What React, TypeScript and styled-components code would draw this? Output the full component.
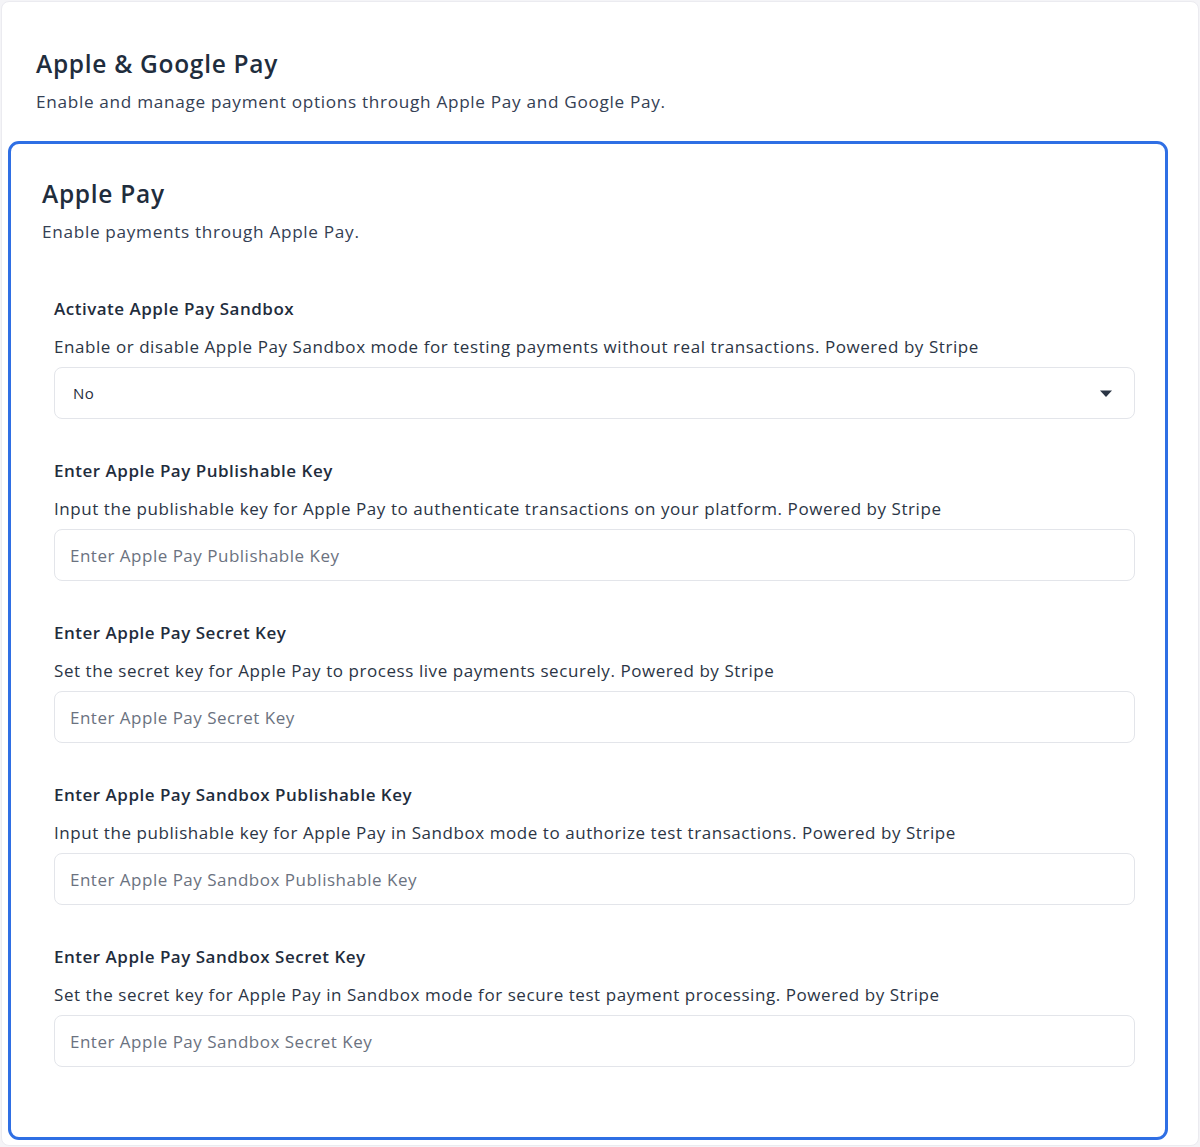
import styled, { createGlobalStyle } from "styled-components";

const GlobalStyle = createGlobalStyle`
  * {
    box-sizing: border-box;
  }

  body {
    margin: 0;
    background: #f4f4f7;
    font-family: "Open Sans", "Liberation Sans", sans-serif;
    color: #1f2d3d;
  }
`;

const Page = styled.div`
  padding: 1px;
`;

const Section = styled.section`
  background: #ffffff;
  border: 1px solid #ebebf0;
  border-radius: 8px;
  padding: 44px 30px 5px 6px;
`;

const SectionHead = styled.div`
  padding-left: 28px;
  margin-bottom: 26px;
`;

const Title = styled.h1`
  margin: 0;
  font-size: 24.5px;
  line-height: 36px;
  font-weight: 600;
  letter-spacing: 0.7px;
  color: #1f2d3d;
`;

const Subtitle = styled.p`
  margin: 7px 0 0;
  font-size: 17.2px;
  line-height: 26px;
  letter-spacing: 0.68px;
  color: #344054;
`;

const Card = styled.div`
  border: 3px solid #2f6fe4;
  border-radius: 11px;
  padding: 32px 30px 70px 31px;
`;

const CardTitle = styled.h2`
  margin: 0;
  font-size: 24.5px;
  line-height: 36px;
  font-weight: 600;
  letter-spacing: 0.7px;
  color: #1f2d3d;
`;

const CardSubtitle = styled.p`
  margin: 7px 0 0;
  font-size: 17.2px;
  line-height: 26px;
  letter-spacing: 0.68px;
  color: #344054;
`;

const Fields = styled.div`
  display: flex;
  flex-direction: column;
  gap: 39px;
  margin-top: 51px;
  padding-left: 12px;
`;

const Field = styled.div`
  display: flex;
  flex-direction: column;
`;

const Label = styled.div`
  font-size: 17px;
  line-height: 26px;
  font-weight: 600;
  letter-spacing: 0.5px;
  color: #1f2d3d;
`;

const Help = styled.div`
  margin-top: 12px;
  font-size: 17px;
  line-height: 26px;
  letter-spacing: 0.56px;
  color: #2b3545;
`;

const Control = styled.div`
  margin-top: 7px;
  height: 52px;
  border: 1px solid #e3e5ea;
  border-radius: 8px;
  background: #ffffff;
  display: flex;
  align-items: center;
`;

const SelectValue = styled.span`
  flex: 1;
  padding-left: 18px;
  font-size: 15px;
  font-weight: 500;
  letter-spacing: 0.4px;
  color: #1f2d3d;
`;

const Caret = styled.svg`
  width: 14px;
  height: 9px;
  margin-right: 21px;
`;

const Input = styled.input`
  width: 100%;
  height: 100%;
  border: none;
  outline: none;
  background: transparent;
  padding: 0 15px;
  font-family: inherit;
  font-size: 17px;
  letter-spacing: 0.5px;
  color: #1f2d3d;

  &::placeholder {
    color: #6b7280;
  }
`;

const fields = [
  {
    label: "Enter Apple Pay Publishable Key",
    help: "Input the publishable key for Apple Pay to authenticate transactions on your platform. Powered by Stripe",
  },
  {
    label: "Enter Apple Pay Secret Key",
    help: "Set the secret key for Apple Pay to process live payments securely. Powered by Stripe",
  },
  {
    label: "Enter Apple Pay Sandbox Publishable Key",
    help: "Input the publishable key for Apple Pay in Sandbox mode to authorize test transactions. Powered by Stripe",
  },
  {
    label: "Enter Apple Pay Sandbox Secret Key",
    help: "Set the secret key for Apple Pay in Sandbox mode for secure test payment processing. Powered by Stripe",
  },
];

export default function App() {
  return (
    <>
      <GlobalStyle />
      <Page>
        <Section>
          <SectionHead>
            <Title>Apple &amp; Google Pay</Title>
            <Subtitle>
              Enable and manage payment options through Apple Pay and Google
              Pay.
            </Subtitle>
          </SectionHead>
          <Card>
            <CardTitle>Apple Pay</CardTitle>
            <CardSubtitle>Enable payments through Apple Pay.</CardSubtitle>
            <Fields>
              <Field>
                <Label>Activate Apple Pay Sandbox</Label>
                <Help>
                  Enable or disable Apple Pay Sandbox mode for testing payments
                  without real transactions. Powered by Stripe
                </Help>
                <Control>
                  <SelectValue>No</SelectValue>
                  <Caret viewBox="0 0 14 9">
                    <path d="M1 1.5h12L7 8z" fill="#2b3545" />
                  </Caret>
                </Control>
              </Field>
              {fields.map((f) => (
                <Field key={f.label}>
                  <Label>{f.label}</Label>
                  <Help>{f.help}</Help>
                  <Control>
                    <Input placeholder={f.label} />
                  </Control>
                </Field>
              ))}
            </Fields>
          </Card>
        </Section>
      </Page>
    </>
  );
}
